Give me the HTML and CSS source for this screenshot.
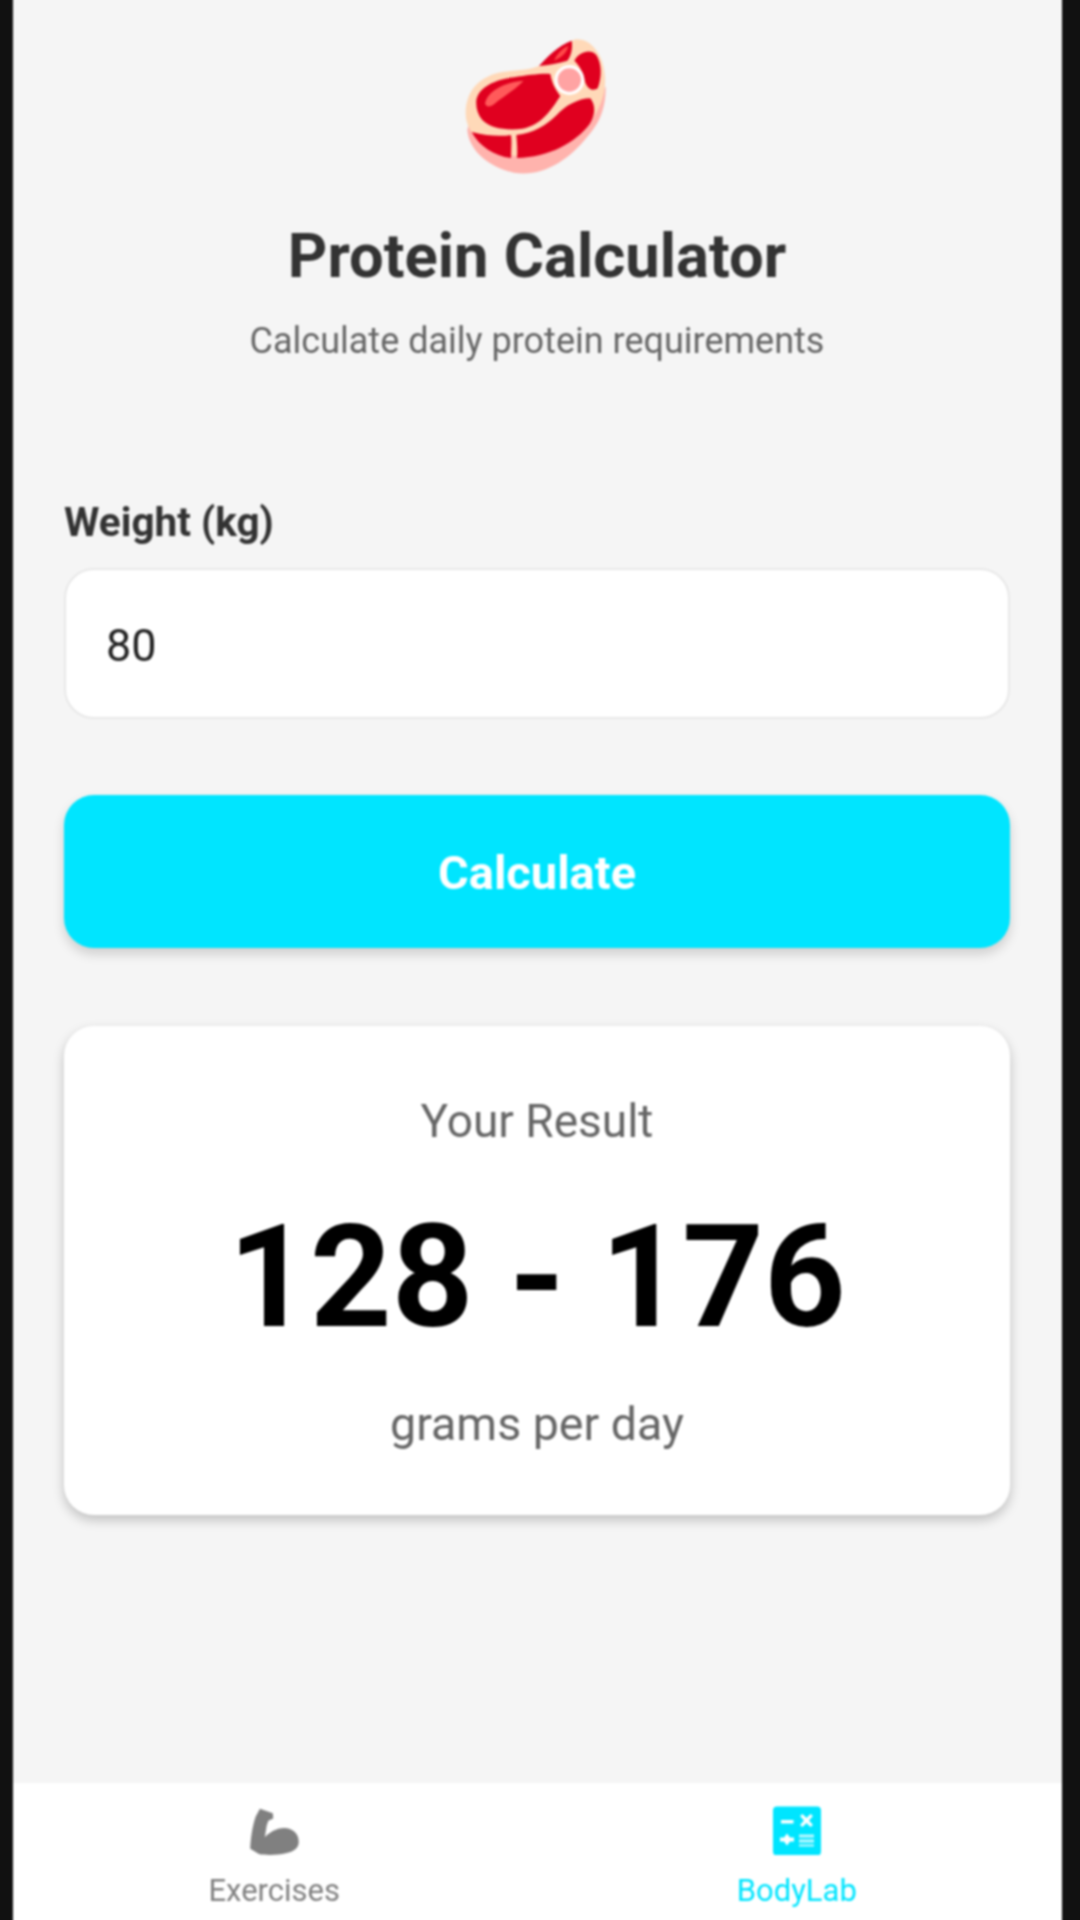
FILE: index.html
```html
<!DOCTYPE html>
<html lang="en">
<head>
    <meta charset="UTF-8">
    <meta name="viewport" content="width=device-width, initial-scale=1.0">
    <title>Protein Calculator</title>
    <link rel="stylesheet" href="styles.css">
</head>
<body>
    <div class="screen">
        <main class="content">
            <div class="header">
                <svg class="meat-icon" viewBox="0 0 720 510" aria-hidden="true">
                    <!-- lower rim -->
                    <path fill="#ffb3ad" d="M145 330C150 390 205 440 285 458C370 472 450 420 505 350C540 310 560 270 560 200L500 250L150 310Z"/>
                    <!-- fat -->
                    <path fill="#ffd9b8" d="M140 280C140 210 185 165 255 155C300 150 340 150 365 135C400 115 425 70 470 58C520 55 555 110 558 170C562 240 530 290 490 335C440 385 370 410 290 408C210 395 140 350 140 280Z"/>
                    <!-- cuts -->
                    <path fill="#e0001f" d="M172 240C180 200 230 178 285 172C325 166 365 160 394 162C400 195 412 212 424 228C398 268 368 316 310 326C265 332 215 326 190 300C176 284 170 262 172 240Z"/>
                    <path fill="#e0001f" d="M158 336C205 348 245 350 276 345C279 370 276 392 276 414C225 408 180 378 158 336Z"/>
                    <path fill="#e0001f" d="M292 345C345 338 382 316 414 284C438 258 478 235 514 235C530 255 530 285 512 312C470 368 390 412 294 414C296 392 294 370 292 345Z"/>
                    <path fill="#e0001f" d="M360 138C385 110 420 75 458 62C462 85 455 110 445 122C420 130 390 135 360 138Z"/>
                    <path fill="#e0001f" d="M466 122C480 95 515 85 532 105C548 130 550 170 536 205C520 216 505 205 498 185C495 160 480 135 466 122Z"/>
                    <!-- highlights -->
                    <path fill="#ff5a5a" d="M198 250C205 212 260 185 314 182C290 208 255 228 226 252C214 262 200 262 198 250Z"/>
                    <path fill="#ff4a4a" d="M405 122C415 100 430 85 448 78C445 95 430 112 405 122Z"/>
                    <!-- bone -->
                    <circle cx="451" cy="180" r="40" fill="#ffa3a3" stroke="#fff" stroke-width="10"/>
                </svg>
                <h1 class="title">Protein Calculator</h1>
                <p class="subtitle">Calculate daily protein requirements</p>
            </div>

            <div class="form-group">
                <label class="field-label" for="weight">Weight (kg)</label>
                <input class="field-input" type="text" id="weight" value="80">
            </div>

            <button class="calc-button">Calculate</button>

            <div class="result-card">
                <p class="result-label">Your Result</p>
                <p class="result-value">128 - 176</p>
                <p class="result-unit">grams per day</p>
            </div>
        </main>

        <nav class="tabbar">
            <div class="tab">
                <svg class="tab-icon tab-icon-arm" viewBox="135 40 170 160" aria-hidden="true">
                    <path fill="#808080" d="M175 48L195 55L215 62L216 78L201 85L196 100L190 136C205 122 225 108 250 108C275 108 295 125 295 150C295 170 280 180 255 186C230 192 190 192 172 188L145 172C146 140 152 100 162 72Z"/>
                </svg>
                <span class="tab-label">Exercises</span>
            </div>
            <div class="tab tab-active">
                <svg class="tab-icon" viewBox="0 0 48 48" aria-hidden="true">
                    <rect x="0" y="0" width="48" height="49" rx="4" fill="#00e5ff"/>
                    <g fill="#fff">
                        <rect x="8" y="13.500" width="12.500" height="3.500"/>
                        <path d="M27 9.500L29.500 7.500L33.500 11.500L37.500 7.500L40 9.500L36 14L40 18.500L37.500 20.500L33.500 16.500L29.500 20.500L27 18.500L31 14Z"/>
                        <path d="M14 27L17 31H21V35H17L14 39L11 35H7V31H11Z"/>
                        <g opacity="0.75">
                            <rect x="26" y="28" width="15" height="3"/>
                            <rect x="26" y="33" width="15" height="3"/>
                            <rect x="26" y="38" width="15" height="2"/>
                        </g>
                    </g>
                </svg>
                <span class="tab-label">BodyLab</span>
            </div>
        </nav>
    </div>
</body>
</html>
```

FILE: styles.css
```css
html, body {
    height: 1920px;
    overflow: hidden;
}
body {
    margin: 0;
    background: #111111;
    font-family: Roboto, "Liberation Sans", sans-serif;
    padding: 0 18px 0 13px;
}
.screen {
    height: 1932px;
    margin-top: -6px;
    padding-top: 6px;
    box-sizing: border-box;
    background: #f5f5f5;
    display: flex;
    flex-direction: column;
    filter: blur(1px);
}
.content {
    flex: 1;
    padding: 0 52px 0 51px;
    display: flex;
    flex-direction: column;
}
.header {
    display: flex;
    flex-direction: column;
    align-items: center;
}
.meat-icon {
    width: 240px;
    height: 170px;
    margin: 20px 0 0 3px;
}
.title {
    margin: 30px 0 0;
    font-size: 61.5px;
    line-height: 72px;
    font-weight: 700;
    color: #333333;
}
.subtitle {
    margin: 28px 0 0;
    font-size: 36px;
    line-height: 42px;
    color: #666666;
}
.form-group {
    margin-top: 137px;
}
.field-label {
    display: block;
    font-size: 40.5px;
    line-height: 46px;
    font-weight: 700;
    color: #333333;
}
.field-input {
    display: block;
    box-sizing: border-box;
    width: 100%;
    height: 151px;
    margin-top: 23px;
    padding: 4px 40px 0;
    border: 2px solid #e8e8e8;
    border-radius: 30px;
    background: #ffffff;
    font-family: inherit;
    font-size: 45px;
    color: #222222;
}
.calc-button {
    display: block;
    width: 100%;
    height: 153px;
    margin-top: 76px;
    padding: 2px 0 0;
    border: none;
    border-radius: 30px;
    background: #00e5ff;
    color: #ffffff;
    font-family: inherit;
    font-size: 47px;
    font-weight: 700;
    box-shadow: 0 6px 12px rgba(0, 0, 0, 0.16);
}
.result-card {
    margin-top: 78px;
    height: 489px;
    box-sizing: border-box;
    padding-top: 68px;
    border-radius: 30px;
    background: #ffffff;
    box-shadow: 0 5px 12px rgba(0, 0, 0, 0.22);
    text-align: center;
}
.result-card p {
    margin: 0;
}
.result-label {
    font-size: 46px;
    line-height: 54px;
    color: #666666;
}
.result-card .result-value {
    margin-top: 47px;
    font-size: 142.5px;
    line-height: 166px;
    font-weight: 700;
    color: #000000;
}
.result-card .result-unit {
    margin-top: 36px;
    font-size: 46.5px;
    line-height: 54px;
    color: #666666;
}
.tabbar {
    height: 143px;
    box-sizing: border-box;
    padding-right: 4px;
    background: #ffffff;
    display: grid;
    grid-template-columns: 1fr 1fr;
}
.tab {
    display: flex;
    flex-direction: column;
    align-items: center;
    padding-top: 23px;
    color: #808080;
}
.tab-active {
    color: #00e5ff;
}
.tab-icon {
    width: 48px;
    height: 49px;
}
.tab-icon-arm {
    width: 55px;
    height: 52px;
    margin-bottom: -3px;
}
.tab-label {
    margin-top: 18px;
    font-size: 31px;
    line-height: 36px;
}
```
